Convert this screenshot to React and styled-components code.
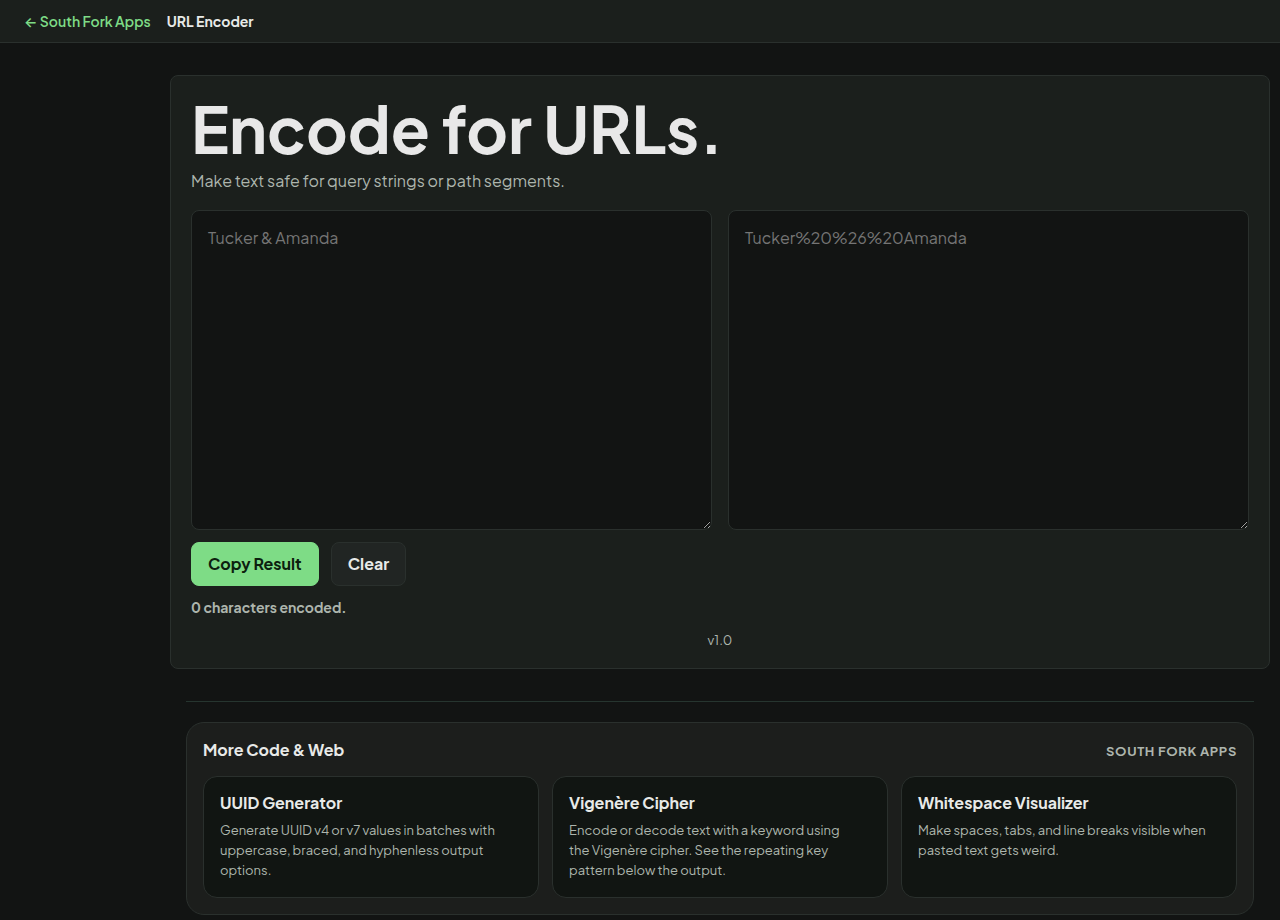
import React from 'react'
import styled, { createGlobalStyle } from 'styled-components'

const related = [
	{
		name: 'UUID Generator',
		text: 'Generate UUID v4 or v7 values in batches with uppercase, braced, and hyphenless output options.'
	},
	{
		name: 'Vigenère Cipher',
		text: 'Encode or decode text with a keyword using the Vigenère cipher. See the repeating key pattern below the output.'
	},
	{
		name: 'Whitespace Visualizer',
		text: 'Make spaces, tabs, and line breaks visible when pasted text gets weird.'
	}
]

const App = () => {
	const [source, setSource] = React.useState('')
	const result = encodeURIComponent(source)

	const copyResult = () => {
		navigator.clipboard.writeText(result).catch(err => console.log(err))
	}

	return (
		<>
			<GlobalStyle />
			<TopBar>
				<HomeLink href="#apps">
					<Arrow>←</Arrow> South Fork Apps
				</HomeLink>
				<PageName>URL Encoder</PageName>
			</TopBar>
			<Layout>
				<Main>
					<Tool>
						<Title>Encode for URLs.</Title>
						<Lead>Make text safe for query strings or path segments.</Lead>
						<Panes>
							<TextBox
								aria-label="Text to encode"
								placeholder="Tucker &amp; Amanda"
								value={source}
								onChange={e => setSource(e.target.value)}
							/>
							<TextBox
								aria-label="Encoded result"
								placeholder="Tucker%20%26%20Amanda"
								value={result}
								readOnly
							/>
						</Panes>
						<Actions>
							<Button $primary onClick={copyResult}>
								Copy Result
							</Button>
							<Button onClick={() => setSource('')}>Clear</Button>
						</Actions>
						<Status>{source.length} characters encoded.</Status>
						<Version>v1.0</Version>
					</Tool>
					<More>
						<MorePanel>
							<MoreHeader>
								<MoreTitle>More Code &amp; Web</MoreTitle>
								<Brand>South Fork Apps</Brand>
							</MoreHeader>
							<CardGrid>
								{related.map(app => (
									<Card key={app.name} href="#app">
										<CardTitle>{app.name}</CardTitle>
										<CardText>{app.text}</CardText>
									</Card>
								))}
							</CardGrid>
						</MorePanel>
					</More>
				</Main>
			</Layout>
		</>
	)
}

export default App

const GlobalStyle = createGlobalStyle`
	* {
		box-sizing: border-box;
	}
	body {
		margin: 0;
		background: #121413;
		color: #e8eae8;
		color-scheme: dark;
		font-family: 'Plus Jakarta Sans', Inter, 'Liberation Sans', sans-serif;
		font-size: 16px;
		line-height: 26px;
	}
	h1, h2, h3, p {
		margin: 0;
	}
`

const TopBar = styled.header`
	display: flex;
	align-items: center;
	gap: 16px;
	padding: 10px 24px;
	background: #1b1f1c;
	border-bottom: 1px solid #2a302d;
	font-size: 14px;
	line-height: 22px;
`
const HomeLink = styled.a`
	color: #7edc86;
	font-weight: 600;
	text-decoration: none;
`
const Arrow = styled.span`
	font-family: Inter, sans-serif;
	line-height: 14px;
`
const PageName = styled.span`
	font-weight: 700;
`

const Layout = styled.div`
	padding-left: 160px;
`
const Main = styled.main`
	max-width: 1100px;
	margin: 0 auto;
	padding-top: 32px;
`
const Tool = styled.section`
	padding: 20px;
	background: #1b1f1c;
	border: 1px solid #2a302d;
	border-radius: 8px;
`
const Title = styled.h1`
	color: #e8e8e8;
	font-size: 64px;
	font-weight: 700;
	line-height: 64px;
`
const Lead = styled.p`
	margin-top: 8px;
	color: #adb5ad;
`
const Panes = styled.div`
	display: grid;
	grid-template-columns: 1fr 1fr;
	gap: 16px;
	margin-top: 16px;
`
const TextBox = styled.textarea`
	display: block;
	width: 100%;
	height: 320px;
	padding: 14px 16px;
	background: #121413;
	border: 1px solid #2a302d;
	border-radius: 8px;
	color: #e8eae8;
	font: inherit;
	resize: vertical;
	&::placeholder {
		color: #757575;
	}
`
const Actions = styled.div`
	display: flex;
	gap: 12px;
	margin-top: 12px;
`
const Button = styled.button`
	height: 44px;
	padding: 0 16px;
	background: ${p => (p.$primary ? '#7edc86' : '#212523')};
	border: 1px solid ${p => (p.$primary ? '#7edc86' : '#2a302d')};
	border-radius: 8px;
	color: ${p => (p.$primary ? '#0c200e' : '#e8eae8')};
	font: inherit;
	font-weight: 700;
	cursor: pointer;
`
const Status = styled.p`
	margin-top: 10px;
	color: #adb5ad;
	font-size: 14px;
	font-weight: 700;
	line-height: 22px;
`
const Version = styled.p`
	margin-top: 14px;
	color: #adb5ad;
	font-size: 13px;
	line-height: 16px;
	text-align: center;
`

const More = styled.section`
	margin: 32px 16px 0;
	padding-top: 20px;
	border-top: 1px solid #26352f;
`
const MorePanel = styled.div`
	padding: 16px;
	background: #1c1e1c;
	border: 1px solid #2a302d;
	border-radius: 18px;
`
const MoreHeader = styled.div`
	display: flex;
	align-items: baseline;
	justify-content: space-between;
	margin-bottom: 14px;
	line-height: 22px;
`
const MoreTitle = styled.h2`
	font-size: 16px;
	font-weight: 700;
`
const Brand = styled.span`
	color: #adb5ad;
	font-size: 13px;
	font-weight: 700;
	letter-spacing: 0.05em;
	text-transform: uppercase;
`
const CardGrid = styled.div`
	display: grid;
	grid-template-columns: repeat(3, 1fr);
	gap: 13px;
`
const Card = styled.a`
	padding: 15px 16px 17px;
	background: #111512;
	border: 1px solid #2a302d;
	border-radius: 14px;
	color: inherit;
	text-decoration: none;
`
const CardTitle = styled.h3`
	font-size: 16px;
	font-weight: 700;
	line-height: 22px;
`
const CardText = styled.p`
	margin-top: 6px;
	padding-right: 12px;
	color: #adb5ad;
	font-size: 13px;
	line-height: 20px;
`
